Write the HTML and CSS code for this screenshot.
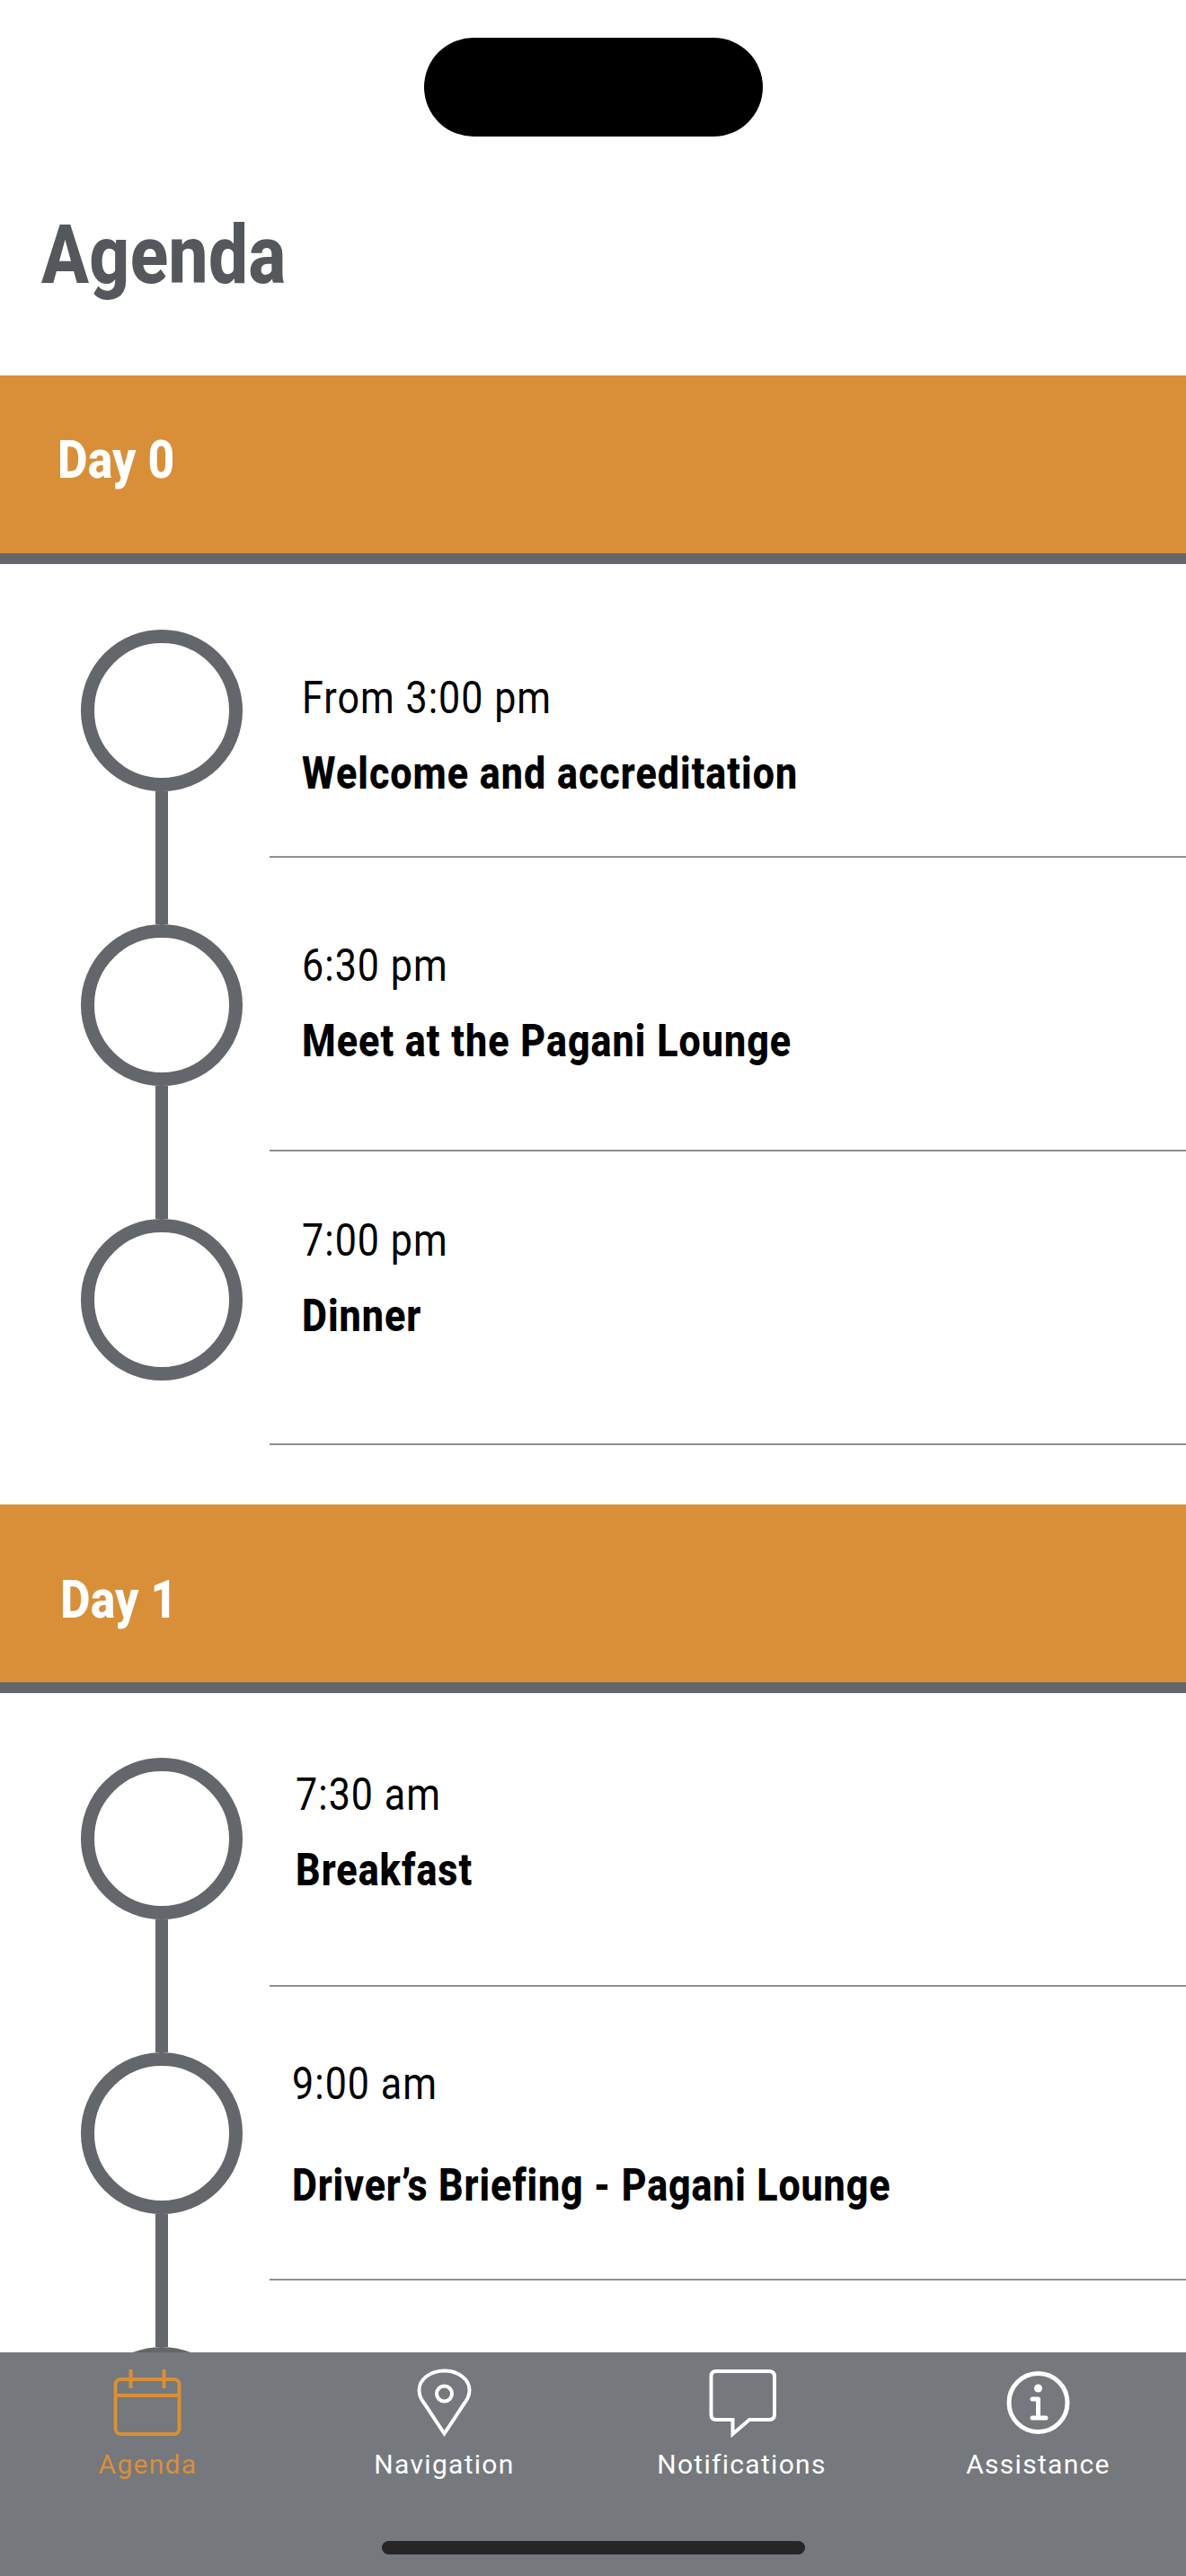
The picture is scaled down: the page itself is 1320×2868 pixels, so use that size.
FILE: index.html
```html
<!DOCTYPE html>
<html lang="en">
<head>
<meta charset="utf-8">
<title>Agenda</title>
<link rel="stylesheet" href="styles.css">
</head>
<body>
<div class="app">
  <div class="status"><div class="island"></div></div>
  <main class="content">
    <h1 class="title"><span class="squeeze">Agenda</span></h1>

    <section class="day day-zero">
      <h2 class="day-bar"><span class="squeeze">Day 0</span></h2>
      <div class="timeline">
        <div class="rail">
          <span class="dot"></span><span class="link"></span>
          <span class="dot"></span><span class="link"></span>
          <span class="dot"></span>
        </div>
        <div class="rows">
          <article class="row row-a">
            <p class="time"><span class="squeeze">From 3:00 pm</span></p>
            <p class="name"><span class="squeeze">Welcome and accreditation</span></p>
          </article>
          <article class="row row-b">
            <p class="time"><span class="squeeze">6:30 pm</span></p>
            <p class="name"><span class="squeeze">Meet at the Pagani Lounge</span></p>
          </article>
          <article class="row row-c">
            <p class="time"><span class="squeeze">7:00 pm</span></p>
            <p class="name"><span class="squeeze">Dinner</span></p>
          </article>
        </div>
      </div>
    </section>

    <section class="day day-one">
      <h2 class="day-bar"><span class="squeeze">Day 1</span></h2>
      <div class="timeline">
        <div class="rail">
          <span class="dot"></span><span class="link"></span>
          <span class="dot"></span><span class="link"></span>
          <span class="dot"></span>
        </div>
        <div class="rows">
          <article class="row row-d">
            <p class="time"><span class="squeeze">7:30 am</span></p>
            <p class="name"><span class="squeeze">Breakfast</span></p>
          </article>
          <article class="row row-e">
            <p class="time"><span class="squeeze">9:00 am</span></p>
            <p class="name"><span class="squeeze">Driver’s Briefing - Pagani Lounge</span></p>
          </article>
        </div>
      </div>
    </section>
  </main>

  <nav class="tabbar">
    <a class="tab tab-active">
      <svg class="icon" viewBox="0 0 80 80" width="80" height="80"><rect x="3.5" y="13" width="71" height="61" rx="6" fill="none" stroke="currentColor" stroke-width="4"/><path d="M3.5 31H74.5M20.5 2V23M57.5 2V23" fill="none" stroke="currentColor" stroke-width="4"/></svg>
      <span>Agenda</span>
    </a>
    <a class="tab">
      <svg class="icon" viewBox="0 0 80 80" width="80" height="80"><path d="M39.5 73.5 18 41C14.5 36 11.5 32 11.5 25 11.5 13 24 3.5 39.5 3.5S67.5 13 67.5 25C67.5 32 64.5 36 61 41Z" fill="none" stroke="currentColor" stroke-width="4"/><circle cx="39.5" cy="29" r="8.5" fill="none" stroke="currentColor" stroke-width="4"/></svg>
      <span>Navigation</span>
    </a>
    <a class="tab">
      <svg class="icon" viewBox="0 0 80 80" width="80" height="80"><path d="M11 4H70Q76 4 76 10V52Q76 58 70 58H48L29.5 74V58H11Q5.5 58 5.5 52V10Q5.5 4 11 4Z" fill="none" stroke="currentColor" stroke-width="4"/></svg>
      <span>Notifications</span>
    </a>
    <a class="tab">
      <svg class="icon" viewBox="0 0 80 80" width="80" height="80"><circle cx="39.5" cy="39" r="32.5" fill="none" stroke="currentColor" stroke-width="5"/><circle cx="39.5" cy="23" r="4.5" fill="currentColor"/><path d="M33 35H39.5V56M33 56H48" fill="none" stroke="currentColor" stroke-width="5" stroke-linecap="round" stroke-linejoin="round"/></svg>
      <span>Assistance</span>
    </a>
    <div class="home"></div>
  </nav>
</div>
</body>
</html>
```
FILE: styles.css
```css
* { box-sizing: border-box; }
html, body { margin: 0; padding: 0; }
body { background: #fff; font-family: "Roboto", "Liberation Sans", sans-serif; }
.app { width: 1320px; height: 2868px; display: flex; flex-direction: column; overflow: hidden; }
.status { height: 152px; padding-top: 42px; display: flex; justify-content: center; flex: none; }
.island { width: 377px; height: 110px; border-radius: 55px; background: #000; }
.content { flex: 1; min-height: 0; overflow: hidden; }
.squeeze { display: inline-block; transform: scaleX(.86); transform-origin: 0 50%; white-space: nowrap; }
.title { margin: 0; padding: 79px 0 0 46px; height: 266px; font-size: 91px; line-height: 106px; font-weight: 800; letter-spacing: .5px; color: #54575b; }
.day-bar { margin: 0; height: 210px; background: #d98f38; border-bottom: 12px solid #63666a; color: #fff; font-size: 60px; font-weight: 800; letter-spacing: .2px; line-height: 70px; padding: 59px 0 0 64px; }
.day-one { margin-top: 66px; }
.day-one .day-bar { padding: 71px 0 0 67px; }
.timeline { display: grid; grid-template-columns: 300px 1fr; }
.rail { display: flex; flex-direction: column; align-items: center; width: 180px; margin-left: 90px; padding-top: 72px; }
.day-zero .rail { padding-top: 73px; }
.dot { flex: none; width: 180px; height: 180px; border: 15px solid #63666a; border-radius: 50%; }
.link { flex: none; width: 14px; height: 148px; background: #63666a; }
.rows { display: flex; flex-direction: column; }
.row { height: 327px; border-bottom: 2px solid #8c8e91; margin: 0; }
.time, .name { margin: 0; color: #000; font-size: 50px; line-height: 60px; letter-spacing: 1.2px; }
.time { font-weight: 400; }
.name { font-weight: 800; }
.row-a { padding: 119px 0 0 36px; }
.row-b { padding: 90px 0 0 36px; }
.row-c { padding: 69px 0 0 36px; }
.row-d { padding: 83px 0 0 29px; }
.row-e { padding: 78px 0 0 25px; }
.row-a .name, .row-b .name, .row-c .name, .row-d .name { margin-top: 24px; }
.row-e .name { margin-top: 53px; letter-spacing: 1px; }
.tabbar { flex: none; height: 249px; background: #75787c; display: grid; grid-template-columns: 329px 331px 331px 329px; position: relative; padding-top: 17px; color: #fff; }
.tab { display: flex; flex-direction: column; align-items: center; color: #fff; font-size: 30px; line-height: 36px; letter-spacing: 1.3px; }
.tab-active { color: #d98f38; }
.icon { display: block; margin-bottom: 10px; }
.home { position: absolute; left: 425px; top: 210px; width: 471px; height: 15px; border-radius: 8px; background: #262626; }
```
